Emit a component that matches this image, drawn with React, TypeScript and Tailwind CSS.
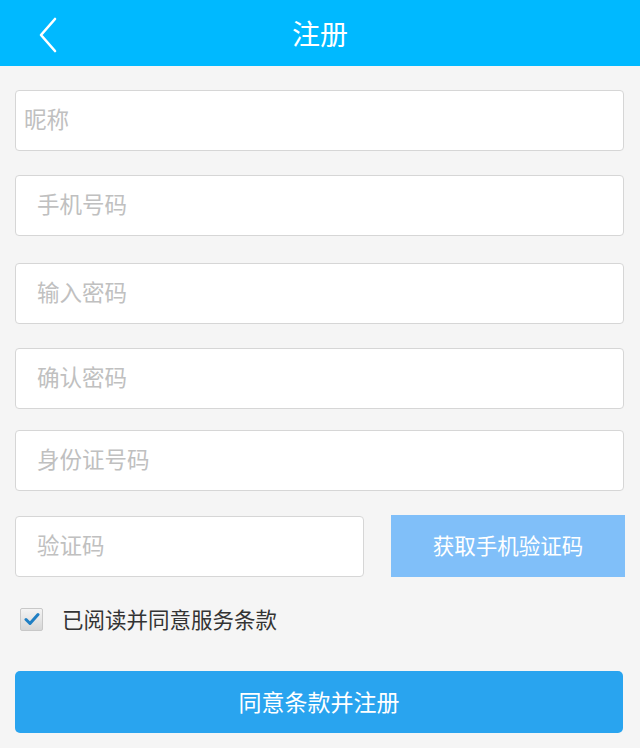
import { useState } from "react";

const FIELDS = [
  { label: "昵称", mt: "mt-[24px]", pl: "pl-[8px]" },
  { label: "手机号码", mt: "mt-[24px]", pl: "pl-[21px]" },
  { label: "输入密码", mt: "mt-[27px]", pl: "pl-[21px]" },
  { label: "确认密码", mt: "mt-[24px]", pl: "pl-[21px]" },
  { label: "身份证号码", mt: "mt-[21px]", pl: "pl-[21px]" },
];

const FONT = "font-['Noto_Sans_CJK_SC','Noto_Sans',sans-serif]";

export default function App() {
  const [agreed, setAgreed] = useState(true);

  return (
    <div className={`min-h-[748px] w-[640px] bg-[#f5f5f5] ${FONT}`}>
      {/* 顶栏 */}
      <div className="relative flex h-[66px] items-center justify-center bg-[#00b9ff]">
        <button className="absolute left-[34px] top-[14px] p-[2px]" aria-label="返回">
          <svg width="24" height="38" viewBox="0 0 24 38" fill="none">
            <path d="M19 3 L5 19 L19 35" stroke="white" strokeWidth="2.6" strokeLinecap="round" strokeLinejoin="round" />
          </svg>
        </button>
        <h1 className="text-[28px] leading-none text-white">注册</h1>
      </div>

      {/* 表单 */}
      <div className="flex flex-col px-[15px]">
        {FIELDS.map((f) => (
          <input
            key={f.label}
            placeholder={f.label}
            className={`${f.mt} h-[61px] w-[609px] rounded-[4px] border border-[#d6d6d6] bg-white ${f.pl} pb-[5px] text-[22.5px] text-[#333] outline-none placeholder:text-[#c0c0c0]`}
          />
        ))}

        <div className="mt-[24px] flex items-center justify-between">
          <input
            placeholder="验证码"
            className="h-[61px] w-[349px] rounded-[4px] border border-[#d6d6d6] bg-white pl-[21px] pb-[5px] text-[22.5px] text-[#333] outline-none placeholder:text-[#c0c0c0]"
          />
          <button className="h-[62px] w-[234px] bg-[#80bff9] pb-[2px] text-[21.5px] text-white">
            获取手机验证码
          </button>
        </div>

        <label className="mt-[26px] flex items-center">
          <span
            onClick={() => setAgreed(!agreed)}
            className="ml-[5px] flex h-[23px] w-[23px] items-center justify-center rounded-[2px] border border-[#c8c8c8] bg-gradient-to-b from-[#f4f4f4] to-[#d6d6d6]"
          >
            {agreed && (
              <svg width="16" height="14" viewBox="0 0 16 14">
                <path d="M2 7.5 L6 11.5 L14 2.5" stroke="#1f7fc4" strokeWidth="3" fill="none" strokeLinecap="round" strokeLinejoin="round" />
              </svg>
            )}
          </span>
          <span className="ml-[19px] text-[21.5px] text-[#333]">已阅读并同意服务条款</span>
        </label>

        <button className="mt-[36px] h-[62px] w-[608px] rounded-[5px] bg-[#29a4ef] pb-[2px] text-[23px] text-white">
          同意条款并注册
        </button>
      </div>
    </div>
  );
}
